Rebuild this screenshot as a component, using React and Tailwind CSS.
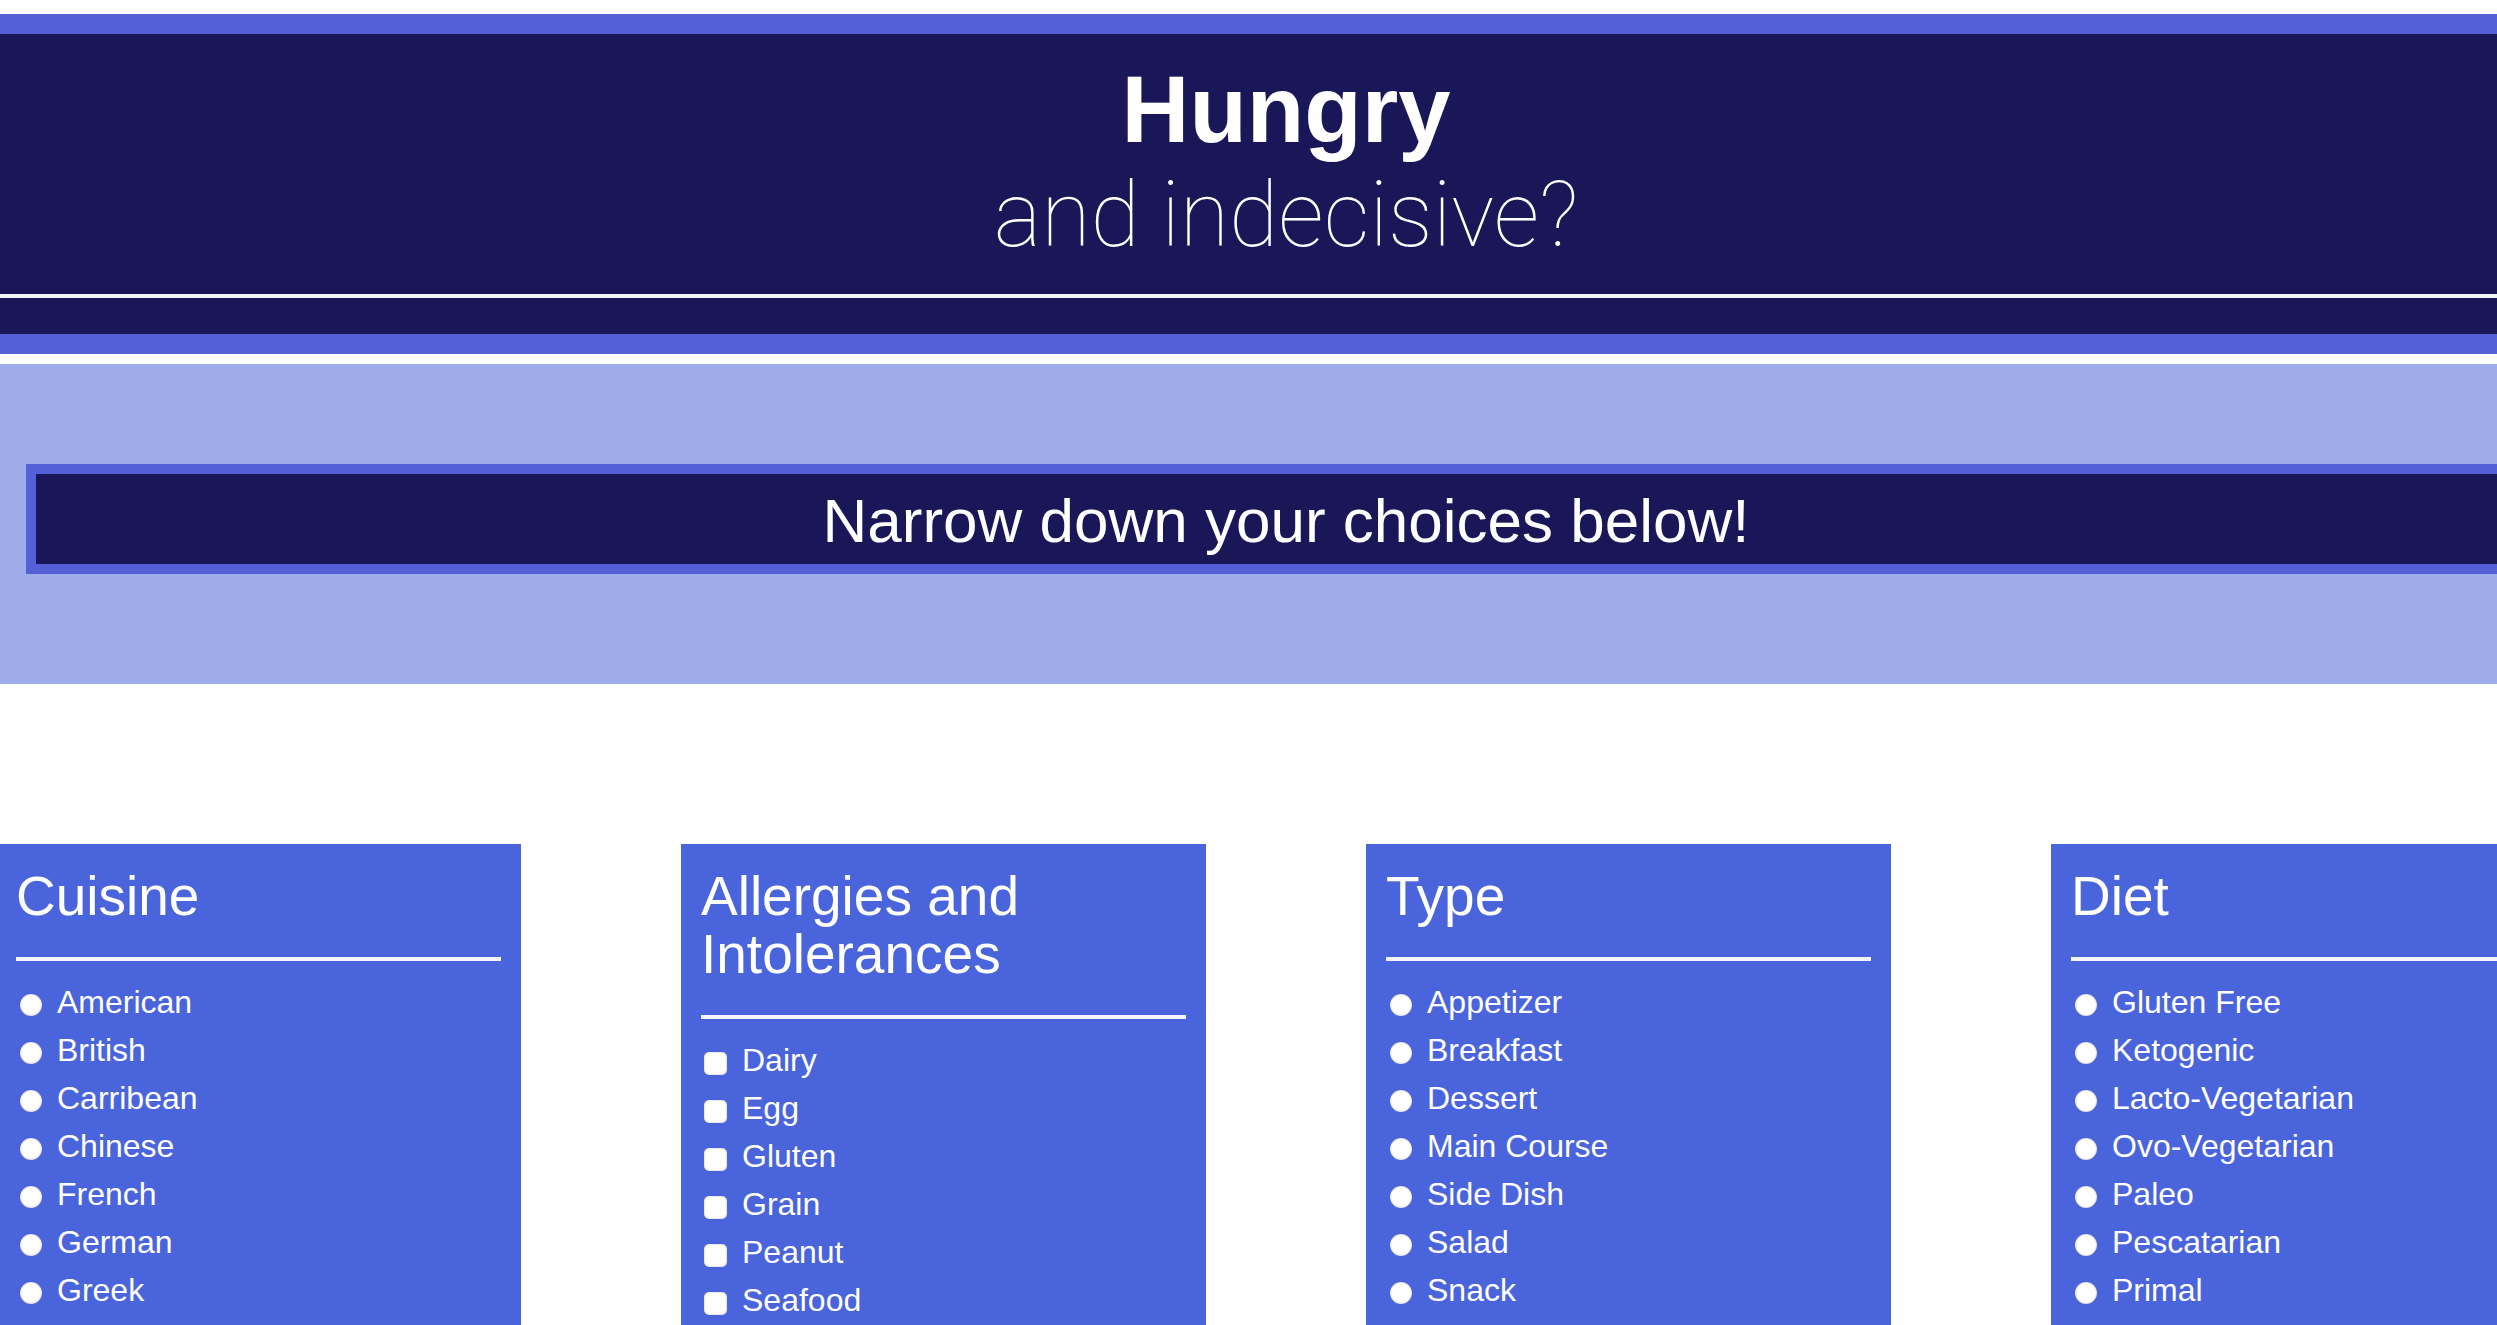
import React from 'react';

// ─── Filter data ──────────────────────────────────────────────────
const filters = [
  {
    title: 'Cuisine',
    kind: 'radio',
    items: ['American', 'British', 'Carribean', 'Chinese', 'French', 'German', 'Greek', 'Italian', 'Mexican'],
  },
  {
    title: 'Allergies and Intolerances',
    kind: 'checkbox',
    items: ['Dairy', 'Egg', 'Gluten', 'Grain', 'Peanut', 'Seafood', 'Sesame', 'Shellfish'],
  },
  {
    title: 'Type',
    kind: 'radio',
    items: ['Appetizer', 'Breakfast', 'Dessert', 'Main Course', 'Side Dish', 'Salad', 'Snack', 'Soup', 'Drink'],
  },
  {
    title: 'Diet',
    kind: 'radio',
    items: ['Gluten Free', 'Ketogenic', 'Lacto-Vegetarian', 'Ovo-Vegetarian', 'Paleo', 'Pescatarian', 'Primal', 'Vegan', 'Vegetarian'],
  },
];

const sans = "font-['Liberation_Sans',Arial,sans-serif]";

// ─── Fake form controls (white like Safari's defaults) ────────────
const Control = ({ kind }) =>
  kind === 'checkbox' ? (
    <span className="ml-[3px] mt-[6px] w-[23px] h-[23px] shrink-0 rounded-[5px] bg-white shadow-[inset_0_0_2px_rgba(0,0,0,0.35)]" />
  ) : (
    <span className="ml-1 mt-[6px] w-[22px] h-[22px] shrink-0 rounded-full bg-white shadow-[inset_0_0_2px_rgba(0,0,0,0.35)]" />
  );

// ─── One filter card ──────────────────────────────────────────────
const FilterCard = ({ title, kind, items }) => (
  <div className="w-[525px] shrink-0 bg-[#4a64dc] px-5 pt-[23px] pb-8 text-white">
    <h2 className="text-[55px] leading-[58px] font-normal">{title}</h2>
    <div className="h-[4px] bg-[#f4f5fb] mt-[32px]" />
    <ul className="mt-[17px]">
      {items.map((item) => (
        <li key={item} className="flex items-center h-12 text-[32px] leading-[48px]">
          <Control kind={kind} />
          <span className="ml-[15px]">{item}</span>
        </li>
      ))}
    </ul>
  </div>
);

export default function App() {
  return (
    <div className={`h-screen w-full overflow-hidden bg-white ${sans}`}>
      <div className="w-[2580px] -ml-[4px]">

        {/* ── Title header ─────────────────────────────────── */}
        <header className="pt-[14px]">
          <div className="h-[20px] bg-[#5461d6]" />
          <div className="h-[260px] bg-[#1a1759] text-white text-center pt-[29px]">
            <h1 className="text-[94px] leading-[94px] font-bold">Hungry</h1>
            <p className="mt-[14px] text-[90px] leading-[90px] font-thin font-['Roboto',sans-serif]">
              and indecisive?
            </p>
          </div>
          <div className="h-[4px] bg-[#f1f4fa]" />
          <div className="h-[36px] bg-[#1a1759]" />
          <div className="h-[20px] bg-[#5461d6]" />
        </header>

        {/* ── Prompt banner ────────────────────────────────── */}
        <section className="mt-[10px] bg-[#9eacea] pt-[100px] pb-[110px] px-[30px]">
          <div className="h-[110px] border-[10px] border-[#5461d6] bg-[#1a1759] flex items-center justify-center">
            <h2 className="text-[62px] leading-[90px] text-white pt-[4px]">Narrow down your choices below!</h2>
          </div>
        </section>

        {/* ── Filter cards ─────────────────────────────────── */}
        <main className="mt-[160px] flex justify-between">
          {filters.map((f) => (
            <FilterCard key={f.title} {...f} />
          ))}
        </main>
      </div>
    </div>
  );
}
